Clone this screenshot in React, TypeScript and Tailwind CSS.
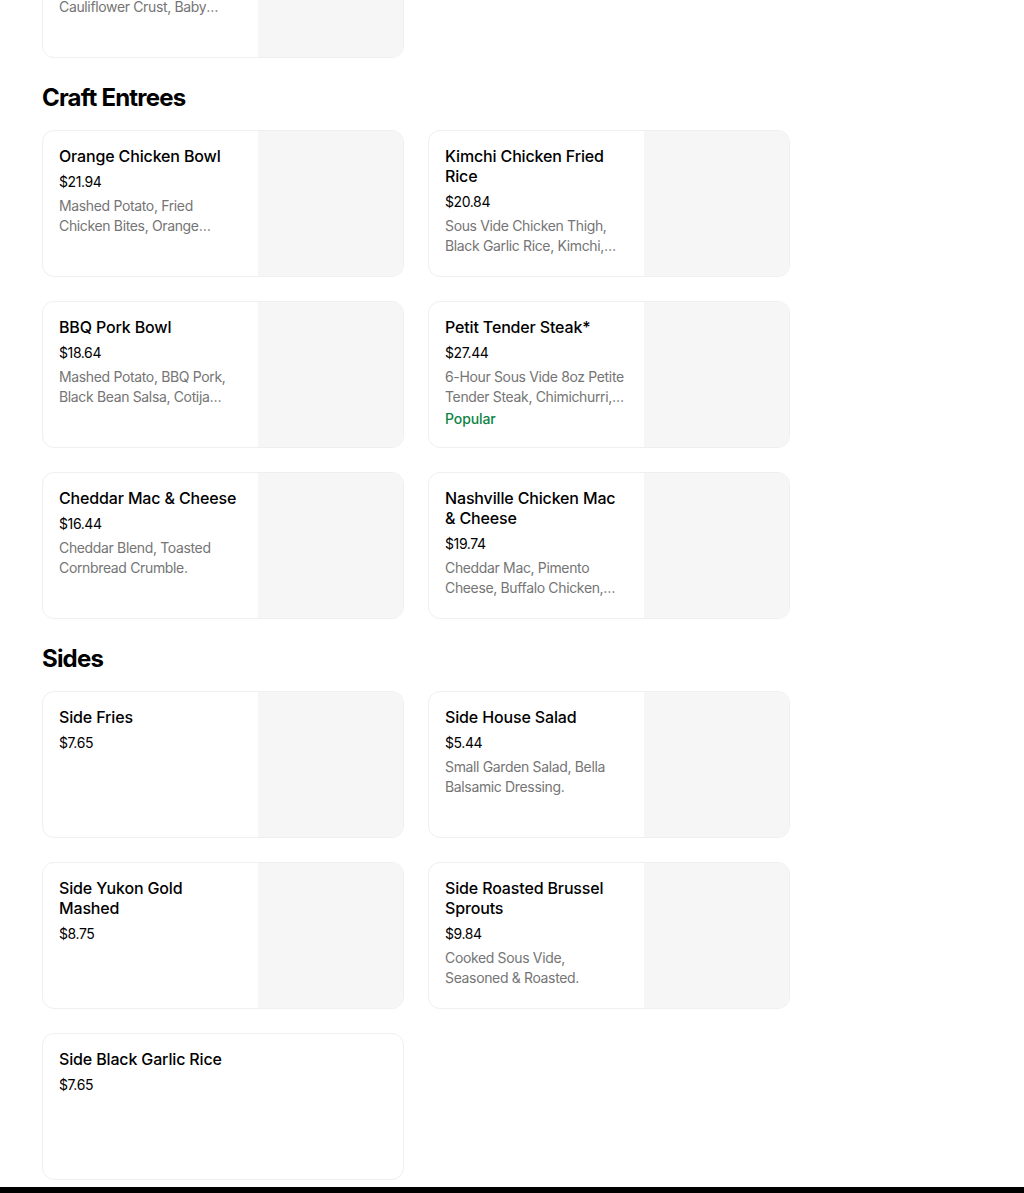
import React from "react";

type Item = {
  title: string;
  price: string;
  desc?: React.ReactNode;
  popular?: boolean;
  image?: boolean;
};

const entrees: Item[] = [
  { title: "Orange Chicken Bowl", price: "$21.94", desc: "Mashed Potato, Fried Chicken Bites, Orange Glaze, Scallions, Sesame Seeds.", image: true },
  { title: "Kimchi Chicken Fried Rice", price: "$20.84", desc: "Sous Vide Chicken Thigh, Black Garlic Rice, Kimchi, Fried Egg, Scallions.", image: true },
  { title: "BBQ Pork Bowl", price: "$18.64", desc: "Mashed Potato, BBQ Pork, Black Bean Salsa, Cotija Cheese, Crispy Onions.", image: true },
  { title: "Petit Tender Steak*", price: "$27.44", desc: "6-Hour Sous Vide 8oz Petite Tender Steak, Chimichurri, Mashed Potato, Brussel Sprouts.", popular: true, image: true },
  { title: "Cheddar Mac & Cheese", price: "$16.44", desc: "Cheddar Blend, Toasted Cornbread Crumble.", image: true },
  { title: "Nashville Chicken Mac & Cheese", price: "$19.74", desc: "Cheddar Mac, Pimento Cheese, Buffalo Chicken, Hot Honey, Pickles.", image: true },
];

const sides: Item[] = [
  { title: "Side Fries", price: "$7.65", image: true },
  { title: "Side House Salad", price: "$5.44", desc: "Small Garden Salad, Bella Balsamic Dressing.", image: true },
  { title: "Side Yukon Gold Mashed", price: "$8.75", image: true },
  { title: "Side Roasted Brussel Sprouts", price: "$9.84", desc: "Cooked Sous Vide, Seasoned & Roasted.", image: true },
  { title: "Side Black Garlic Rice", price: "$7.65", image: false },
];

function Card({ item }: { item: Item }) {
  return (
    <li className="flex h-[147px] overflow-hidden rounded-[12px] border border-[#efefef] bg-white">
      <div className="flex min-w-0 flex-1 flex-col pt-[15px] pl-[16px] pr-[18px]">
        <div className="line-clamp-2 text-[16px] font-medium leading-[20px] tracking-[-0.15px] text-[#000000]">
          {item.title}
        </div>
        <div className="mt-[6px] text-[14px] leading-[20px] tracking-[-0.4px] text-[#000000]">
          {item.price}
        </div>
        {item.desc && (
          <div className="mt-[4px] line-clamp-2 text-[14px] leading-[20px] tracking-[-0.35px] text-[#757575]">
            {item.desc}
          </div>
        )}
        {item.popular && (
          <div className="mt-[2px] text-[14px] font-medium leading-[20px] tracking-[-0.1px] text-[#0e8345]">
            Popular
          </div>
        )}
      </div>
      {item.image && <div className="h-full w-[145px] shrink-0 bg-[#f6f6f6]" />}
    </li>
  );
}

function Section({ title, items }: { title: string; items: Item[] }) {
  return (
    <section>
      <h3 className="pt-[25px] pb-[17px] text-[24px] font-bold leading-[30px] tracking-[-0.8px] text-black">
        {title}
      </h3>
      <ul className="grid grid-cols-2 gap-[24px]">
        {items.map((it) => (
          <Card key={it.title} item={it} />
        ))}
      </ul>
    </section>
  );
}

export default function App() {
  return (
    <div className="min-h-[1193px] bg-white" style={{ fontFamily: "Inter, 'Noto Sans', sans-serif" }}>
      <div className="w-[748px] ml-[42px]">
        <ul className="-mt-[89px] grid grid-cols-2 gap-[24px]">
          <Card
            item={{
              title: "Veggie Flatbread",
              price: "$15.34",
              desc: (
                <>
                  Pesto, Fresh Mozzarella,
                  <br />
                  Cauliflower Crust, Baby Arugula, Tomato.
                </>
              ),
              image: true,
            }}
          />
        </ul>
        <Section title="Craft Entrees" items={entrees} />
        <Section title="Sides" items={sides} />
      </div>
      <div className="mt-[7px] h-[200px] bg-black" />
    </div>
  );
}
